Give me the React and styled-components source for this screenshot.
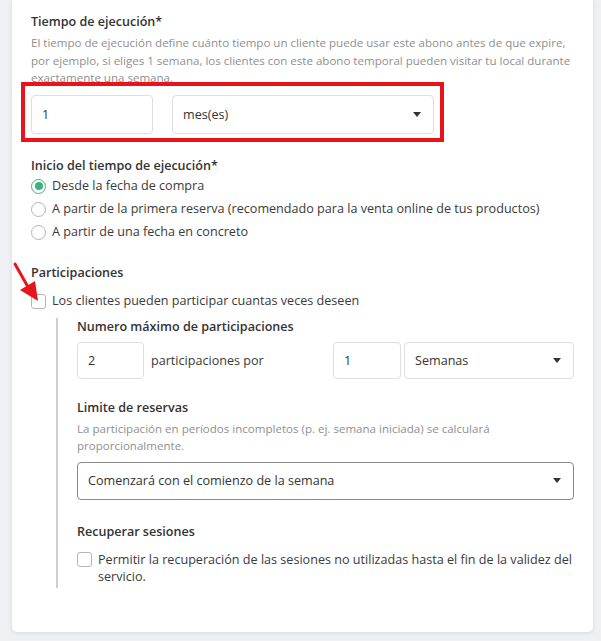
import React from "react";
import styled, { createGlobalStyle } from "styled-components";

const Global = createGlobalStyle`
  html, body { margin: 0; padding: 0; background: #eef0f4; }
  body { font-family: "Open Sans", "Noto Sans", sans-serif; color: #3a3a3a; }
  * { box-sizing: border-box; }
`;

const Page = styled.div`
  width: 601px;
  height: 641px;
  padding: 0 8px 0 12px;
  overflow: hidden;
`;

const Card = styled.div`
  position: relative;
  background: #fff;
  height: 632px;
  border-radius: 0 0 5px 5px;
  box-shadow: 0 1px 4px rgba(40, 50, 70, 0.12);
  padding: 13px 19px 0 19px;
`;

const Title = styled.div`
  font-size: 12.55px;
  font-weight: 600;
  line-height: 18px;
  color: #333;
  margin-top: ${(p) => p.$mt || 0}px;
`;

const Desc = styled.div`
  font-size: 11.55px;
  line-height: 17.5px;
  color: #8f8f8f;
  margin-top: ${(p) => p.$mt || 0}px;
`;

const Row = styled.div`
  position: relative;
  display: flex;
  align-items: center;
  gap: ${(p) => p.$gap || 0}px;
  margin-top: ${(p) => p.$mt || 0}px;
`;

const Field = styled.div`
  display: flex;
  align-items: center;
  height: ${(p) => p.$h || 38}px;
  width: ${(p) => (p.$w ? p.$w + "px" : "auto")};
  flex: ${(p) => (p.$w ? "none" : 1)};
  border: 1px solid ${(p) => (p.$dark ? "#8a8a8a" : "#dedede")};
  border-radius: 4px;
  padding: 0 12px 0 10px;
  font-size: 12.6px;
  color: #333;
  background: #fff;
`;

const FieldText = styled.span`
  flex: 1;
  white-space: nowrap;
`;

const Caret = styled.span`
  width: 0;
  height: 0;
  border-left: 4.5px solid transparent;
  border-right: 4.5px solid transparent;
  border-top: 5px solid #333;
`;

const Inline = styled.span`
  flex: 1;
  font-size: 12.6px;
  color: #3a3a3a;
  padding-left: 7px;
`;

const Highlight = styled.div`
  position: absolute;
  left: -10px;
  top: -13px;
  width: 423px;
  height: 60px;
  border: 4px solid #e8141b;
  pointer-events: none;
`;

const Options = styled.div`
  display: flex;
  flex-direction: column;
`;

const Option = styled.label`
  display: flex;
  align-items: ${(p) => (p.$top ? "flex-start" : "center")};
  gap: 6px;
  min-height: 23px;
  font-size: 12.6px;
  line-height: 17.5px;
  color: #3a3a3a;
  margin-top: ${(p) => p.$mt || 0}px;
`;

const Radio = styled.span`
  flex: none;
  width: 15px;
  height: 15px;
  border-radius: 50%;
  border: 1.5px solid ${(p) => (p.$on ? "#3cb27d" : "#b5b5b5")};
  display: flex;
  align-items: center;
  justify-content: center;
  &::after {
    content: "";
    width: 8px;
    height: 8px;
    border-radius: 50%;
    background: ${(p) => (p.$on ? "#3cb27d" : "transparent")};
  }
`;

const Check = styled.span`
  flex: none;
  width: 15px;
  height: 15px;
  border-radius: 3px;
  border: 1.5px solid #b5b5b5;
  margin-top: ${(p) => p.$mt || 0}px;
`;

const Nested = styled.div`
  margin: 5px 0 0 25px;
  border-left: 2px solid #cfcfcf;
  padding-left: 19px;
  padding-bottom: 2px;
`;

const Arrow = styled.svg`
  position: absolute;
  left: -12px;
  top: 0;
  pointer-events: none;
`;

export default function App() {
  return (
    <Page>
      <Global />
      <Card>
        <Title>Tiempo de ejecución*</Title>
        <Desc $mt={3}>
          El tiempo de ejecución define cuánto tiempo un cliente puede usar este abono antes de que expire,
          por ejemplo, si eliges 1 semana, los clientes con este abono temporal pueden visitar tu local durante
          exactamente una semana.
        </Desc>
        <Row $gap={19} $mt={8}>
          <Field $w={122} $h={39}><FieldText>1</FieldText></Field>
          <Field $w={262} $h={39}><FieldText>mes(es)</FieldText><Caret /></Field>
          <Highlight />
        </Row>

        <Title $mt={23}>Inicio del tiempo de ejecución*</Title>
        <Options>
          <Option><Radio $on />Desde la fecha de compra</Option>
          <Option><Radio />A partir de la primera reserva (recomendado para la venta online de tus productos)</Option>
          <Option><Radio />A partir de una fecha en concreto</Option>
        </Options>

        <Title $mt={20}>Participaciones</Title>
        <Option $mt={8}><Check />Los clientes pueden participar cuantas veces deseen</Option>

        <Nested>
          <Title>Numero máximo de participaciones</Title>
          <Row $mt={6}>
            <Field $w={67} $h={37}><FieldText>2</FieldText></Field>
            <Inline>participaciones por</Inline>
            <Field $w={68} $h={37}><FieldText>1</FieldText></Field>
            <Field $w={170} $h={37} style={{ marginLeft: 3 }}><FieldText>Semanas</FieldText><Caret /></Field>
          </Row>

          <Title $mt={20}>Limite de reservas</Title>
          <Desc $mt={3}>
            La participación en períodos incompletos (p. ej. semana iniciada) se calculará
            proporcionalmente.
          </Desc>
          <Row $mt={7}>
            <Field $dark $h={38}><FieldText>Comenzará con el comienzo de la semana</FieldText><Caret /></Field>
          </Row>

          <Title $mt={23}>Recuperar sesiones</Title>
          <Option $top $mt={10}>
            <Check $mt={1} />
            <span>Permitir la recuperación de las sesiones no utilizadas hasta el fin de la validez del servicio.</span>
          </Option>
        </Nested>

        <Arrow width="60" height="320" viewBox="0 0 60 320">
          <line x1="15" y1="264" x2="28" y2="287" stroke="#e8141b" strokeWidth="3" strokeLinecap="round" />
          <polygon points="38,301 20,290 35,281" fill="#e8141b" />
        </Arrow>
      </Card>
    </Page>
  );
}
